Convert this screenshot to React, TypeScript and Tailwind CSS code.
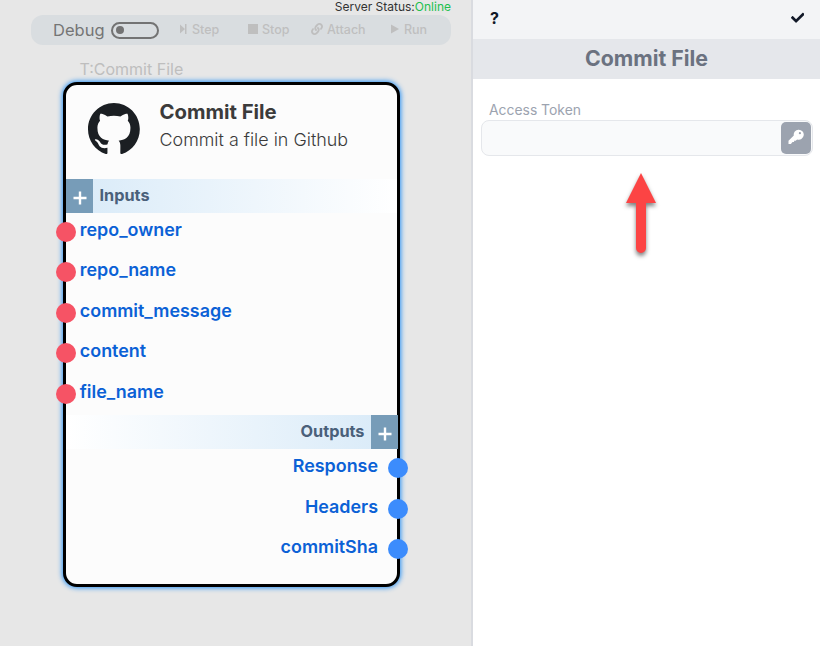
import React from "react";
import { FaCheck, FaLink } from "react-icons/fa";

const inputs = ["repo_owner", "repo_name", "commit_message", "content", "file_name"];
const outputs = ["Response", "Headers", "commitSha"];

function Plus() {
  return (
    <svg width="14" height="14" viewBox="0 0 14 14" className="mt-[3px] ml-px" stroke="#fff" strokeWidth="2.4">
      <path d="M7 .5v13M.5 7h13" />
    </svg>
  );
}

function KeyIcon() {
  return (
    <svg width="16" height="16" viewBox="0 0 16 16" fill="currentColor" className="-mt-[3px]">
      <path fillRule="evenodd" d="M10.400.7a5 5 0 1 1-1.300 9.700l-1.400 1.300H6.100v1.400H4.500L2.900 15H.5v-3.200l5.300-5.300A4.900 4.900 0 0 1 10.400.7zM11.900 3.100a1.100 1.100 0 1 0 0 2.200 1.100 1.100 0 0 0 0-2.200z" />
    </svg>
  );
}

function GithubMark() {
  return (
    <svg width="52" height="51" viewBox="0 0 98 96" fill="#1b1f23" className="mt-[18px] ml-[22px] shrink-0">
      <path d="M48.854 0C21.839 0 0 22 0 49.217c0 21.756 13.993 40.172 33.405 46.690 2.427.49 3.316-1.059 3.316-2.362 0-1.141-.080-5.052-.080-9.127-13.590 2.934-16.420-5.867-16.420-5.867-2.184-5.704-5.420-7.170-5.420-7.170-4.448-3.015.324-3.015.324-3.015 4.934.326 7.523 5.052 7.523 5.052 4.367 7.496 11.404 5.378 14.235 4.074.404-3.178 1.699-5.378 3.074-6.600-10.839-1.141-22.243-5.378-22.243-24.283 0-5.378 1.940-9.778 5.014-13.200-.485-1.222-2.184-6.275.486-13.038 0 0 4.125-1.304 13.426 5.052a46.970 46.970 0 0 1 12.214-1.630c4.125 0 8.330.571 12.213 1.630 9.302-6.356 13.427-5.052 13.427-5.052 2.670 6.763.970 11.816.485 13.038 3.155 3.422 5.015 7.822 5.015 13.200 0 18.905-11.404 23.060-22.324 24.283 1.780 1.548 3.316 4.481 3.316 9.126 0 6.600-.080 11.897-.080 13.526 0 1.304.890 2.853 3.316 2.364 19.412-6.520 33.405-24.935 33.405-46.691C97.707 22 75.788 0 48.854 0z" />
    </svg>
  );
}

function Toolbar() {
  return (
    <div className="ml-[31px] flex h-[30px] w-[420px] items-center rounded-[12px] bg-[#d9dde0] text-[12.500px] font-medium text-[#bfbfbf]">
      <span className="ml-[22px] w-[58px] text-[16.500px] font-normal leading-[30px] text-[#757575]">Debug</span>
      <span className="flex h-[17px] w-[48px] items-center rounded-full border-2 border-[#737373] pl-[3px]">
        <span className="size-2 rounded-full bg-[#737373]" />
      </span>
      <span className="ml-[21px] flex w-[68px] items-center">
        <svg width="7" height="10" viewBox="0 0 7 10" fill="currentColor" className="mr-[5px] mb-0.5">
          <path d="M0 .5 5 5 0 9.500zM5 0h1.500v10H5z" />
        </svg>
        Step
      </span>
      <span className="flex w-[62px] items-center">
        <span className="mr-[4px] mb-[3px] size-[10px] bg-current" />
        Stop
      </span>
      <span className="flex w-[81px] items-center">
        <FaLink size={12} className="mr-[4px] mb-0.5 ml-px" />
        Attach
      </span>
      <span className="flex items-center">
        <svg width="8" height="10" viewBox="0 0 8 10" fill="currentColor" className="mr-[5px] mb-0.5">
          <path d="M0 .5 8 5 0 9.500z" />
        </svg>
        Run
      </span>
    </div>
  );
}

function NodeCard() {
  return (
    <div className="ml-[63px] h-[505px] w-[337px] rounded-[14px] border-[3px] border-black bg-[#fcfcfc] shadow-[0_0_5px_1px_#2b93f5]">
      <div className="flex h-[94px]">
        <GithubMark />
        <div className="ml-[19.500px] pt-[13px] text-[#3b3b3b]">
          <div className="text-[20.300px] font-bold leading-[28px]">Commit File</div>
          <div className="text-[17.900px] font-light leading-[28px]">Commit a file in Github</div>
        </div>
      </div>
      <div className="flex h-[34px] bg-linear-to-r from-[#d8eaf8] to-white text-[16.300px] font-bold leading-[33px] text-[#4a607a]">
        <span className="mr-[6.500px] flex w-[27px] items-center justify-center bg-[#779cb8]"><Plus /></span>
        Inputs
      </div>
      <div className="h-[202.400px] text-[17.900px] font-semibold text-[#0b61d6]">
        {inputs.map((name) => (
          <div key={name} className="relative -top-[1.600px] -ml-[9.700px] flex h-[40.500px] items-center">
            <span className="mr-[3.500px] size-[20px] shrink-0 rounded-full bg-[#f65365]" />
            <span className="-mt-[2.500px]">{name}</span>
          </div>
        ))}
      </div>
      <div className="-mr-px flex h-[34px] justify-end bg-linear-to-l from-[#d8eaf8] to-white text-[16.300px] font-bold leading-[32px] text-[#4a607a]">
        Outputs
        <span className="ml-[6.500px] flex w-[27px] items-center justify-center bg-[#779cb8]"><Plus /></span>
      </div>
      <div className="text-[17.900px] font-semibold text-[#0b61d6]">
        {outputs.map((name) => (
          <div key={name} className="relative -top-[1.600px] -mr-[11.400px] flex h-[40.500px] items-center justify-end">
            <span className="-mt-[2.500px]">{name}</span>
            <span className="ml-[10.400px] size-[20px] shrink-0 rounded-full bg-[#3c8cfc]" />
          </div>
        ))}
      </div>
    </div>
  );
}

export default function App() {
  return (
    <div className="flex h-[646px] w-[820px] overflow-hidden bg-white font-['Inter',sans-serif]">
      <main className="w-[471px] shrink-0 bg-[#e7e7e7]">
        <div className="h-[15px] pr-[20px] text-right text-[12px] leading-[14px] text-[#333]">
          Server Status:<span className="text-[#22c04e]">Online</span>
        </div>
        <Toolbar />
        <div className="h-[37px] pt-[12px] pl-[79.500px] text-[16px] leading-6 text-[#bebebe]">T:Commit File</div>
        <NodeCard />
      </main>
      <aside className="relative flex-1 border-l-2 border-[#d9dbe0]">
        <header className="flex h-[39px] items-center justify-between bg-[#f3f4f6] pr-[16px] pl-[17px] text-[#111827]">
          <span className="-mt-[3px] text-[16px] font-bold">?</span>
          <FaCheck size={13.500} className="-mt-[4px]" />
        </header>
        <h1 className="h-10 bg-[#e5e7eb] text-center text-[21.300px] font-bold leading-[39px] text-[#6b7280]">Commit File</h1>
        <label className="block pt-[21px] pl-[16px] text-[13.900px] leading-5 text-[#9ca3af]">Access Token</label>
        <div className="ml-2 flex h-[36px] w-[332px] items-center justify-end rounded-lg border border-[#e5e7eb] bg-[#f9fafb] pr-px">
          <span className="flex h-8 w-[30px] items-center justify-center rounded-[5px] bg-[#9ca3af] text-white">
            <KeyIcon />
          </span>
        </div>
        <svg width="50" height="100" viewBox="0 0 50 100" className="absolute top-[168px] left-[143px] drop-shadow-[0_3px_2px_rgba(0,0,0,.5)]">
          <path fill="#fc4444" d="M25 5 40 35H30V80a5 5 0 0 1-10 0V35H10z" />
        </svg>
      </aside>
    </div>
  );
}
